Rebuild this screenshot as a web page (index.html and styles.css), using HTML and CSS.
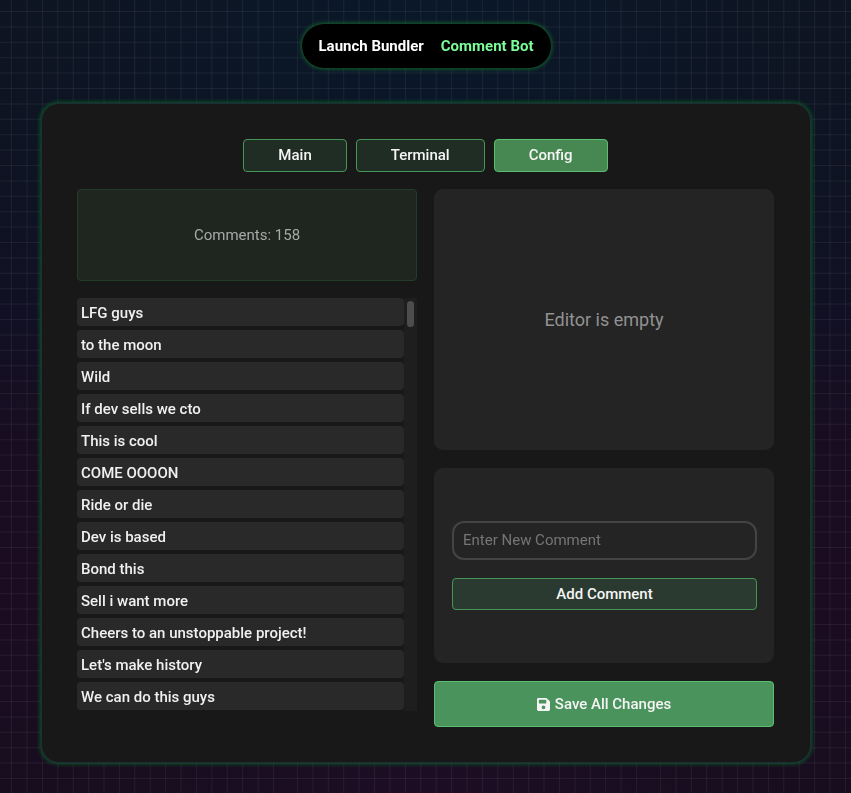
FILE: index.html
```html
<!DOCTYPE html>
<html lang="en">
<head>
<meta charset="utf-8">
<meta name="viewport" content="width=device-width, initial-scale=1">
<title>Comment Bot</title>
<link rel="stylesheet" href="styles.css">
</head>
<body>
<svg class="grid-bg" aria-hidden="true">
  <defs>
    <pattern id="grid-x" x="-66" width="363" height="100" patternUnits="userSpaceOnUse">
      <path d="M0 50H342" stroke="#fff" stroke-opacity=".06" stroke-width="100" stroke-dasharray="1 14.41"/>
    </pattern>
    <pattern id="grid-y" y="11" width="100" height="800" patternUnits="userSpaceOnUse">
      <path d="M50 0V372M50 382V790" stroke="#fff" stroke-opacity=".06" stroke-width="100" stroke-dasharray="1 14.4"/>
    </pattern>
  </defs>
  <rect width="100%" height="100%" fill="url(#grid-x)"/>
  <rect width="100%" height="100%" fill="url(#grid-y)"/>
</svg>
<nav class="switcher">
  <a href="#launch">Launch Bundler</a>
  <a href="#bot" class="current">Comment Bot</a>
</nav>
<main class="panel">
  <div class="tabs">
    <button type="button" class="btn">Main</button>
    <button type="button" class="btn">Terminal</button>
    <button type="button" class="btn active">Config</button>
  </div>
  <div class="columns">
    <section class="left">
      <div class="count">Comments: 158</div>
      <div class="list-box">
        <ul class="list">
          <li>LFG guys</li>
          <li>to the moon</li>
          <li>Wild</li>
          <li>If dev sells we cto</li>
          <li>This is cool</li>
          <li>COME OOOON</li>
          <li>Ride or die</li>
          <li>Dev is based</li>
          <li>Bond this</li>
          <li>Sell i want more</li>
          <li>Cheers to an unstoppable project!</li>
          <li>Let's make history</li>
          <li>We can do this guys</li>
        </ul>
        <div class="track"><div class="thumb"></div></div>
      </div>
    </section>
    <section class="right">
      <div class="editor">Editor is empty</div>
      <form class="add">
        <input type="text" placeholder="Enter New Comment" aria-label="Enter New Comment">
        <button type="button" class="btn">Add Comment</button>
      </form>
      <button type="button" class="btn save">
        <svg viewBox="0 0 448 448" aria-hidden="true"><path fill="currentColor" fill-rule="evenodd" d="M48 0H310Q328 0 341 13L435 107Q448 120 448 138V400Q448 448 400 448H48Q0 448 0 400V48Q0 0 48 0ZM88 64Q64 64 64 88V168Q64 192 88 192H296Q320 192 320 168V88Q320 64 296 64ZM224 256A64 64 0 1 0 224 384A64 64 0 1 0 224 256Z"/></svg>
        Save All Changes
      </button>
    </section>
  </div>
</main>
</body>
</html>
```
FILE: styles.css
```css
* { box-sizing: border-box; }

body {
  margin: 0;
  min-height: 100vh;
  padding: 24px 40px 30px 41px;
  display: flex;
  flex-direction: column;
  align-items: center;
  gap: 35px;
  color: #f0f0f0;
  font: 500 15px/18px Roboto, sans-serif;
  background:
    radial-gradient(circle at 50% 0%, rgba(5, 28, 50, .5), transparent 55%),
    radial-gradient(circle at 100% 75%, rgba(35, 8, 40, .5), transparent 40%),
    radial-gradient(circle at 0% 75%, rgba(35, 8, 40, .5), transparent 40%),
    radial-gradient(ellipse at 50% 100%, rgba(33, 12, 40, .7), transparent 60%),
    linear-gradient(#0f1420, #0e1223 40%, #140f1c 60%, #140f1c);
}

.grid-bg {
  position: fixed;
  inset: 0;
  z-index: -1;
  width: 100%;
  height: 100%;
}

.switcher {
  display: flex;
  align-items: center;
  gap: 17px;
  height: 44px;
  padding: 0 17px;
  border-radius: 22px;
  background: #000;
  box-shadow: 0 0 4px 1px #14642d;
  font-weight: 700;
}

.switcher a { color: #fff; text-decoration: none; }
.switcher .current { color: #7cfc98; }

.panel {
  width: 100%;
  flex: 1;
  display: flex;
  flex-direction: column;
  gap: 17px;
  padding: 35px 36px 35px 35px;
  border: 1px solid #1d2e36;
  border-radius: 18px;
  background: #181818;
  box-shadow: 0 0 4px 1px #0b5a24;
}

.tabs { display: flex; justify-content: center; gap: 9px; }

.btn {
  height: 33px;
  padding: 0 34px 2px;
  border: 1px solid #459656;
  border-radius: 4px;
  background: #202d25;
  color: #f5f5f5;
  font: inherit;
}

.btn.active { background: #478752; border-color: #5abf70; }

.columns {
  flex: 1;
  display: grid;
  grid-template-columns: 1fr 1fr;
  gap: 17px;
}

.left, .right { display: flex; flex-direction: column; min-width: 0; }
.left { gap: 17px; }
.right { gap: 18px; }

.count {
  height: 92px;
  display: grid;
  place-items: center;
  border: 1px solid #233b2a;
  border-radius: 4px;
  background: #1e261f;
  color: #a8a8a8;
  font-weight: 400;
}

.list-box { display: flex; height: 413px; overflow: hidden; }

.list {
  flex: 1;
  display: flex;
  flex-direction: column;
  gap: 4px;
  margin: 0;
  padding: 0;
  list-style: none;
}

.list li {
  flex: none;
  padding: 6px 4px 4px;
  border-radius: 4px;
  background: #292929;
}

.track { width: 13px; padding: 3px; background: #1e1e1e; }
.thumb { height: 26px; border-radius: 4px; background: #4d4d4d; }

.editor {
  height: 261px;
  display: grid;
  place-items: center;
  border-radius: 9px;
  background: #242424;
  color: #929292;
  font-weight: 400;
  font-size: 18px;
}

.add {
  height: 195px;
  display: flex;
  flex-direction: column;
  justify-content: center;
  gap: 18px;
  padding: 0 17px 0 18px;
  border-radius: 9px;
  background: #242424;
}

.add input {
  width: 100%;
  height: 39px;
  padding: 0 9px 2px;
  border: 2px solid #444;
  border-radius: 12px;
  background: transparent;
  color: #f0f0f0;
  font: inherit;
  font-weight: 400;
}

.add input::placeholder { color: #757575; }
.add .btn { height: 32px; padding-bottom: 0; background: #2b3a30; }

.save {
  height: 46px;
  padding-bottom: 0;
  display: flex;
  align-items: center;
  justify-content: center;
  gap: 5px;
  background: #4a935c;
  border-color: #5abf70;
}

.save svg { width: 13px; height: 13px; }
```
